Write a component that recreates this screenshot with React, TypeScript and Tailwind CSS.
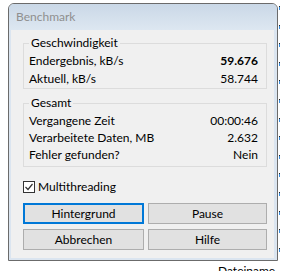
import React from 'react';

const font = "font-['Lato','Liberation_Sans',sans-serif]";

const Row = ({ label, value, bold = false, h = 'h-[18px]' }: { label: string; value: string; bold?: boolean; h?: string }) => (
  <div className={`flex items-center justify-between pl-[5px] pr-[8px] ${h}`}>
    <span>{label}</span>
    <span className={bold ? 'font-bold' : ''}>{value}</span>
  </div>
);

const Group = ({ title, children, className = '' }: { title: string; children: React.ReactNode; className?: string }) => (
  <fieldset className={`border border-[#dcdcdc] ${className}`}>
    <legend className="ml-[5px] px-[2px] leading-[14px]">{title}</legend>
    {children}
  </fieldset>
);

const Button = ({ label, focused = false, w }: { label: string; focused?: boolean; w: string }) => (
  <button
    className={`h-[21px] ${w} bg-[#e1e1e1] flex items-center justify-center leading-none ${
      focused ? 'border-2 border-[#0078d7]' : 'border border-[#adadad]'
    }`}
  >
    {label}
  </button>
);

const ticks = Array.from({ length: 14 });

export default function App() {
  return (
    <div className={`w-[282px] h-[271px] bg-white overflow-hidden relative text-[12px] text-black ${font}`}>
      <div className="flex pt-[3px] pl-[8px]">
        <div className="w-[270px] h-[258px] border border-[#6b6b6b] rounded-t-[6px] bg-[#dbe5f0] flex flex-col overflow-hidden">
          <div className="h-[26px] shrink-0 flex items-center pl-[7px] bg-gradient-to-b from-[#cad8e7] to-[#dde7f1] text-[#8f8f8f]">
            Benchmark
          </div>
          <div className="flex-1 ml-[2px] mr-[3px] mb-[2px] bg-[#f0f0f0] pl-[12px] pr-[7px] flex flex-col">
            <Group title="Geschwindigkeit" className="mt-[6px] pt-[2px]">
              <Row label="Endergebnis, kB/s" value="59.676" bold />
              <Row label="Aktuell, kB/s" value="58.744" />
            </Group>
            <Group title="Gesamt" className="mt-[7px] pt-[2px] pb-[3px]">
              <Row label="Vergangene Zeit" value="00:00:46" h="h-[17px]" />
              <Row label="Verarbeitete Daten, MB" value="2.632" h="h-[17px]" />
              <Row label="Fehler gefunden?" value="Nein" h="h-[17px]" />
            </Group>
            <label className="mt-[14px] flex items-center gap-[3px] h-[12px]">
              <span className="w-[12px] h-[12px] border border-[#333333] bg-white flex items-center justify-center">
                <svg width="10" height="10" viewBox="0 0 10 10">
                  <path d="M1.5 5 L4 7.5 L8.5 2" fill="none" stroke="#333333" strokeWidth="1.2" />
                </svg>
              </span>
              <span>Multithreading</span>
            </label>
            <div className="mt-[10px] grid grid-cols-[121px_119px] gap-x-[4px] gap-y-[5px]">
              <Button label="Hintergrund" focused w="w-[121px]" />
              <Button label="Pause" w="w-[119px]" />
              <Button label="Abbrechen" w="w-[121px]" />
              <Button label="Hilfe" w="w-[119px]" />
            </div>
          </div>
        </div>
        <div className="ml-[1px] flex flex-col pt-[3px] gap-[14.6px]">
          {ticks.map((_, i) => (
            <div key={i} className="w-[2px] h-[4px] flex flex-col">
              <div className="h-[1px] w-[1px] bg-[#222222]" />
              <div className="h-[3px] w-[1px] bg-[#3a8ee0]" />
            </div>
          ))}
        </div>
      </div>
      <div className="absolute left-[218px] top-[264px] leading-[14px]">Dateiname</div>
    </div>
  );
}
